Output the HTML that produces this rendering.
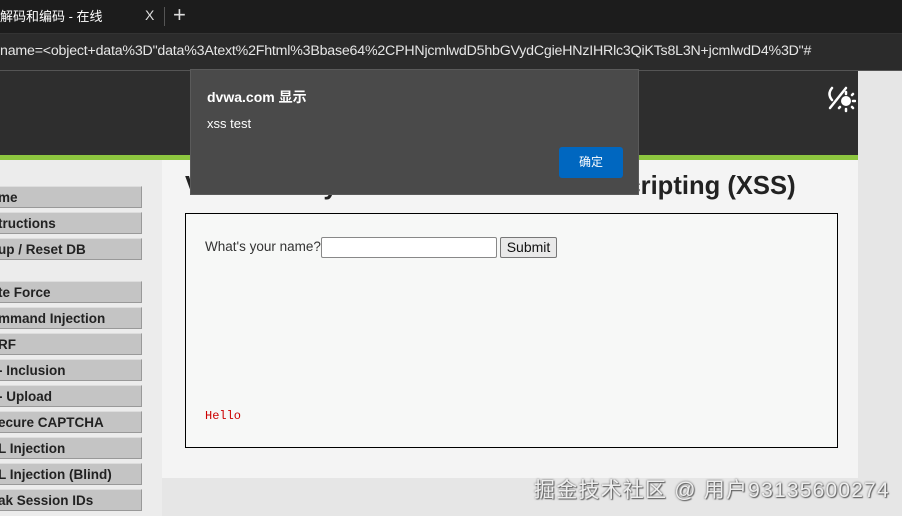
<!DOCTYPE html>
<html><head><meta charset="utf-8"><style>
body{margin:0;width:902px;height:516px;overflow:hidden;position:relative;background:#e6e6e6;font-family:"Liberation Sans","Noto Sans CJK SC",sans-serif}
.a{position:absolute}
.menu{position:absolute;left:0;width:142px;height:22px;background:#c4c4c4;border:1px solid #999;border-left:none;border-top-color:#ddd;box-sizing:border-box;font-weight:bold;font-size:13.5px;color:#222;line-height:21px;white-space:nowrap;overflow:hidden;text-indent:-2px}
</style></head><body>
<div class="a" style="left:0;top:0;width:902px;height:33px;background:#1c1c1c"></div>
<div class="a" style="left:0;top:6px;color:#fff;font-size:13px">解码和编码 - 在线</div>
<div class="a" style="left:145px;top:7px;color:#ddd;font-size:14px">X</div>
<div class="a" style="left:164px;top:7px;width:1px;height:19px;background:#555"></div>
<div class="a" style="left:173px;top:2px;color:#ddd;font-size:22px;font-weight:300">+</div>
<div class="a" style="left:0;top:33px;width:902px;height:36px;background:#2b2b2b;border-top:1px solid #333;border-bottom:1px solid #555"></div>
<div class="a" style="left:0;top:43px;color:#e6e6e6;font-size:14.2px;letter-spacing:-0.2px;white-space:nowrap">name=&lt;object+data%3D"data%3Atext%2Fhtml%3Bbase64%2CPHNjcmlwdD5hbGVydCgieHNzIHRlc3QiKTs8L3N+jcmlwdD4%3D"#</div>
<div class="a" style="left:0;top:71px;width:858px;height:84px;background:#2e2e2e"></div>
<div class="a" style="left:0;top:155px;width:858px;height:5px;background:#8dc63f"></div>
<div class="a" style="left:858px;top:71px;width:44px;height:445px;background:#e6e6e6"></div>
<svg class="a" style="left:826px;top:84px" width="30" height="30" viewBox="0 0 30 30" fill="none" stroke="#fff" stroke-width="2.5" stroke-linecap="round"><path d="M6 4 Q1 10 6 16"/><path d="M4 24 L20 4"/><circle cx="20" cy="17" r="5" fill="#fff" stroke="none"/><path d="M20 8v2M27 17h2M20 25v2M26 11l1-1M26 23l1 1M14 23l-1 1"/></svg>
<div class="a" style="left:0;top:160px;width:858px;height:318px;background:#f4f4f4"></div>
<div class="a" style="left:0;top:160px;width:162px;height:356px;background:#ececec"></div>
<div class="menu" style="top:186px">me</div>
<div class="menu" style="top:212px">tructions</div>
<div class="menu" style="top:238px">up / Reset DB</div>
<div class="menu" style="top:281px">te Force</div>
<div class="menu" style="top:307px">mmand Injection</div>
<div class="menu" style="top:333px">RF</div>
<div class="menu" style="top:359px">- Inclusion</div>
<div class="menu" style="top:385px">- Upload</div>
<div class="menu" style="top:411px">ecure CAPTCHA</div>
<div class="menu" style="top:437px">L Injection</div>
<div class="menu" style="top:463px">L Injection (Blind)</div>
<div class="menu" style="top:489px">ak Session IDs</div>
<div class="a" style="left:185px;top:172px;font-size:25.6px;font-weight:bold;color:#222;white-space:nowrap">Vulnerability: Reflected Cross Site Scripting (XSS)</div>
<div class="a" style="left:185px;top:213px;width:651px;height:233px;border:1px solid #000;background:#f7f8f7"></div>
<div class="a" style="left:205px;top:239px;font-size:13.5px;color:#333">What's your name?</div>
<div class="a" style="left:321px;top:237px;width:174px;height:19px;border:1px solid #888;background:#fff;border-radius:2px"></div>
<div class="a" style="left:500px;top:237px;width:55px;height:19px;border:1px solid #777;background:#e9e9e9;border-radius:2px;font-size:14px;text-align:center;line-height:19px;color:#111">Submit</div>
<div class="a" style="left:205px;top:409px;font-family:'Liberation Mono',monospace;font-size:12px;color:#c00">Hello</div>
<div class="a" style="left:190px;top:69px;width:449px;height:126px;background:#4a4a4a;border:1px solid #5a5a5a;box-sizing:border-box"></div>
<div class="a" style="left:207px;top:87px;color:#fff;font-size:14px;font-weight:bold">dvwa.com 显示</div>
<div class="a" style="left:207px;top:116px;color:#fff;font-size:13px">xss test</div>
<div class="a" style="left:559px;top:147px;width:64px;height:31px;background:#0067c0;border-radius:3px;color:#fff;font-size:12px;text-align:center;line-height:31px">确定</div>
<div class="a" style="left:534px;top:474px;font-size:21px;color:#eee;text-shadow:0 0 2px #555,1px 1px 1px #666;white-space:nowrap;letter-spacing:1.2px">掘金技术社区 @ 用户93135600274</div>
</body></html>
